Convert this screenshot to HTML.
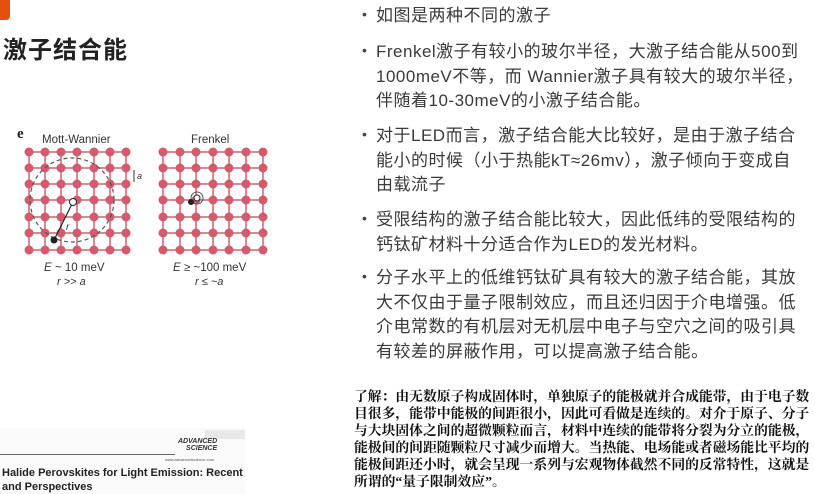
<!DOCTYPE html>
<html><head><meta charset="utf-8"><style>
body{margin:0;width:815px;height:494px;background:#fff;position:relative;overflow:hidden;font-family:"Liberation Sans","Noto Sans CJK SC",sans-serif}
.t{position:absolute;left:0;top:0}
.r{position:absolute;left:376px;font-size:17px;color:#3a3a3a;line-height:24.5px;white-space:nowrap;letter-spacing:0.5px}
.b{position:absolute;left:362px;font-size:14px;color:#444}
.n{position:absolute;left:354px;top:388px;font-family:"Liberation Serif","Noto Serif CJK SC",serif;font-size:13.8px;line-height:17px;color:#111;white-space:nowrap;font-weight:bold}
</style></head><body>
<div style="position:absolute;left:0;top:0;width:10px;height:20px;background:#e5500f;border-radius:0 0 4px 0"></div>
<div style="position:absolute;left:3px;top:30px;font-size:24px;font-weight:bold;color:#222;font-family:'Noto Sans CJK SC',sans-serif;letter-spacing:1px">激子结合能</div>

<svg class="t" width="340" height="300" viewBox="0 0 340 300">
<defs>
<g id="row">
<circle cx="29" cy="0" r="4.5"/><circle cx="45" cy="0" r="4.5"/><circle cx="61" cy="0" r="4.5"/><circle cx="77" cy="0" r="4.5"/><circle cx="94" cy="0" r="4.5"/><circle cx="110" cy="0" r="4.5"/><circle cx="126" cy="0" r="4.5"/>
<circle cx="163" cy="0" r="4.5"/><circle cx="180" cy="0" r="4.5"/><circle cx="196" cy="0" r="4.5"/><circle cx="213" cy="0" r="4.5"/><circle cx="229" cy="0" r="4.5"/><circle cx="246" cy="0" r="4.5"/><circle cx="263" cy="0" r="4.5"/>
</g>
</defs>
<text x="17" y="138" font-family="Liberation Serif" font-weight="bold" font-size="15" fill="#222">e</text>
<text x="42" y="143" font-family="Liberation Sans" font-size="11.5" fill="#333">Mott-Wannier</text>
<text x="191" y="143" font-family="Liberation Sans" font-size="11.5" fill="#333">Frenkel</text>
<g stroke="#d98a96" stroke-width="2">
<path d="M29 152H126M29 168H126M29 184H126M29 200H126M29 217H126M29 233H126M29 250H126M29 152V250M45 152V250M61 152V250M77 152V250M94 152V250M110 152V250M126 152V250"/>
<path d="M163 152H263M163 168H263M163 184H263M163 200H263M163 217H263M163 233H263M163 250H263M163 152V250M180 152V250M196 152V250M213 152V250M229 152V250M246 152V250M263 152V250"/>
</g>
<g fill="#d45a6c">
<use href="#row" y="152"/><use href="#row" y="168"/><use href="#row" y="184"/><use href="#row" y="200"/><use href="#row" y="217"/><use href="#row" y="233"/><use href="#row" y="250"/>
</g>
<circle cx="72" cy="200" r="42" fill="none" stroke="#555" stroke-width="1.2" stroke-dasharray="4 3"/>
<line x1="54" y1="240" x2="73" y2="202" stroke="#222" stroke-width="1.2"/>
<circle cx="73" cy="202" r="3.5" fill="#fff" stroke="#222"/>
<circle cx="54" cy="240" r="3.5" fill="#222"/>
<text x="66" y="230" font-size="10" font-style="italic" fill="#333" font-family="Liberation Sans">r</text>
<path d="M134 170V182" stroke="#333"/><text x="137" y="179" font-size="9" font-style="italic" fill="#333" font-family="Liberation Sans">a</text>
<circle cx="197" cy="198" r="6" fill="none" stroke="#555"/>
<circle cx="197" cy="198" r="3" fill="#fff" stroke="#222"/>
<circle cx="191" cy="202" r="3" fill="#222"/>
<text x="44" y="271" font-family="Liberation Sans" font-size="11.5" font-style="italic" fill="#333">E</text><text x="55" y="271" font-family="Liberation Sans" font-size="11.5" fill="#333">~ 10 meV</text>
<text x="57" y="285" font-family="Liberation Sans" font-size="11" font-style="italic" fill="#333">r  &gt;&gt; a</text>
<text x="173" y="271" font-family="Liberation Sans" font-size="11.5" font-style="italic" fill="#333">E</text><text x="184" y="271" font-family="Liberation Sans" font-size="11.5" fill="#333">≥ ~100 meV</text>
<text x="195" y="285" font-family="Liberation Sans" font-size="11" font-style="italic" fill="#333">r  ≤ ~a</text>
</svg>

<div style="position:absolute;left:0;top:428px;width:245px;height:66px;background:#fafafa"></div>
<div style="position:absolute;left:205px;top:430px;width:40px;height:9px;background:#e8e8e8"></div>
<div style="position:absolute;left:0;top:454px;width:175px;height:1px;background:#666"></div>
<div style="position:absolute;left:178px;top:438px;font-size:7px;font-weight:bold;font-style:italic;color:#333;line-height:7px;text-align:right">ADVANCED<br>SCIENCE</div>
<div style="position:absolute;left:165px;top:457px;font-size:4px;color:#555">www.advancedscience.com</div>
<div style="position:absolute;left:2px;top:466px;font-size:11px;font-weight:bold;color:#222;line-height:14px">Halide Perovskites for Light Emission: Recent<br>and Perspectives</div>

<div class="b" style="top:6px">•</div><div class="r" style="top:4px">如图是两种不同的激子</div>
<div class="b" style="top:42px">•</div><div class="r" style="top:40px">Frenkel激子有较小的玻尔半径，大激子结合能从500到<br>1000meV不等，而 Wannier激子具有较大的玻尔半径，<br>伴随着10-30meV的小激子结合能。</div>
<div class="b" style="top:126px">•</div><div class="r" style="top:124px">对于LED而言，激子结合能大比较好，是由于激子结合<br>能小的时候（小于热能kT≈26mv），激子倾向于变成自<br>由载流子</div>
<div class="b" style="top:210px">•</div><div class="r" style="top:208px">受限结构的激子结合能比较大，因此低纬的受限结构的<br>钙钛矿材料十分适合作为LED的发光材料。</div>
<div class="b" style="top:268px">•</div><div class="r" style="top:266px">分子水平上的低维钙钛矿具有较大的激子结合能，其放<br>大不仅由于量子限制效应，而且还归因于介电增强。低<br>介电常数的有机层对无机层中电子与空穴之间的吸引具<br>有较差的屏蔽作用，可以提高激子结合能。</div>

<div class="n">了解：由无数原子构成固体时，单独原子的能极就并合成能带，由于电子数<br>目很多，能带中能极的间距很小，因此可看做是连续的。对介于原子、分子<br>与大块固体之间的超微颗粒而言，材料中连续的能带将分裂为分立的能极，<br>能极间的间距随颗粒尺寸减少而增大。当热能、电场能或者磁场能比平均的<br>能极间距还小时，就会呈现一系列与宏观物体截然不同的反常特性，这就是<br>所谓的“量子限制效应”。</div>
</body></html>
